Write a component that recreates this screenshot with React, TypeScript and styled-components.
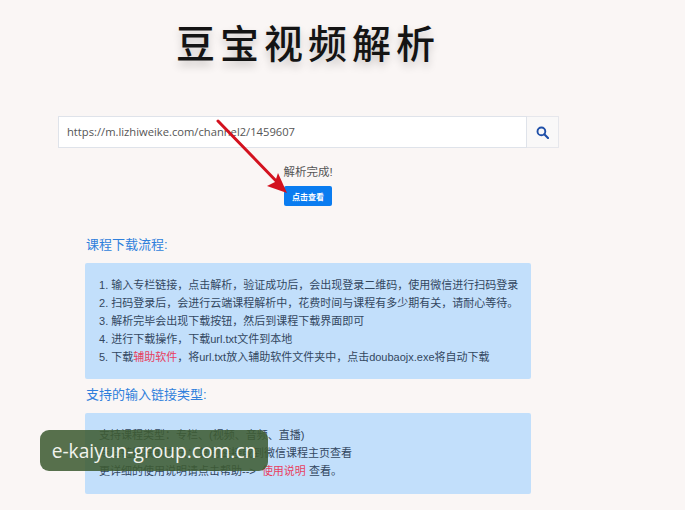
import { ReactElement } from 'react';

import styled, { createGlobalStyle } from 'styled-components';

const GlobalStyle = createGlobalStyle`
	html, body {
		margin: 0;
		padding: 0;
		background: #faf6f5;
	}
	body {
		font-family: "Liberation Sans", "Noto Sans CJK SC", sans-serif;
		overflow: hidden;
	}
`;

const STEPS = [
	'输入专栏链接，点击解析，验证成功后，会出现登录二维码，使用微信进行扫码登录',
	'扫码登录后，会进行云端课程解析中，花费时间与课程有多少期有关，请耐心等待。',
	'解析完毕会出现下载按钮，然后到课程下载界面即可',
	'进行下载操作，下载url.txt文件到本地',
];

export default function App(): ReactElement {
	return (
		<Page>
			<GlobalStyle />
			<Title>豆宝视频解析</Title>

			<SearchRow>
				<UrlField>https://m.lizhiweike.com/channel2/1459607</UrlField>
				<SearchButton type="button" aria-label="search">
					<svg width="13" height="13" viewBox="0 0 13 13" fill="none" aria-hidden="true">
						<circle cx="5.4" cy="5.4" r="3.9" stroke="#1f4fa8" strokeWidth="1.9" />
						<path d="M8.3 8.3 12 12" stroke="#1f4fa8" strokeWidth="2.1" strokeLinecap="round" />
					</svg>
				</SearchButton>
			</SearchRow>

			<Result>
				<ResultText>解析完成!</ResultText>
				<ViewButton type="button">点击查看</ViewButton>
			</Result>

			<Section>
				<Heading>课程下载流程:</Heading>
				<InfoBox>
					{STEPS.map((step, i) => (
						<Line key={step}>
							{i + 1}. {step}
						</Line>
					))}
					<Line>
						5. 下载<Hot>辅助软件</Hot>，将url.txt放入辅助软件文件夹中，点击doubaojx.exe将自动下载
					</Line>
				</InfoBox>
				<Heading>支持的输入链接类型:</Heading>
				<InfoBox $last>
					<Line>支持课程类型：专栏、(视频、音频、直播)</Line>
					<Line>专栏链接获取方法：复制链接或到微信课程主页查看</Line>
					<Line>
						更详细的使用说明请点击帮助--&gt;&nbsp; <Hot>使用说明</Hot> 查看。
					</Line>
				</InfoBox>
			</Section>

			<Arrow width="100" height="100" viewBox="0 0 100 100" aria-hidden="true">
				<path d="M3 3 66 68" stroke="#d3121f" strokeWidth="3" strokeLinecap="round" />
				<path d="M72 75 52 68 60 64 63 55Z" fill="#d3121f" />
			</Arrow>

			<Watermark>e-kaiyun-group.com.cn</Watermark>
		</Page>
	);
}

const Page = styled.div`
	position: relative;
	width: 685px;
	height: 510px;
	overflow: hidden;
	padding-top: 17px;
	box-sizing: border-box;
	background: #faf6f5;
`;

const Title = styled.h1`
	width: max-content;
	margin: 0 0 0 176px;
	height: 64px;
	font-family: "Noto Sans CJK SC", sans-serif;
	font-size: 39px;
	font-weight: 500;
	line-height: 48px;
	letter-spacing: 5px;
	color: #141414;
	text-shadow: 0 5px 9px rgba(0, 0, 0, 0.2);
`;

const SearchRow = styled.div`
	display: flex;
	width: 501px;
	height: 32px;
	margin: 35px 0 0 58px;
`;

const UrlField = styled.div`
	flex: 1;
	box-sizing: border-box;
	padding-left: 8px;
	background: #fff;
	border: 1px solid #dfe3ea;
	font-family: "Open Sans", "Liberation Sans", sans-serif;
	font-size: 11.2px;
	line-height: 30px;
	color: #555;
`;

const SearchButton = styled.button`
	display: flex;
	align-items: center;
	justify-content: center;
	width: 32px;
	padding: 0;
	background: #f9f8f8;
	border: 1px solid #e6e7ec;
	border-left: 0;
`;

const Result = styled.div`
	display: flex;
	flex-direction: column;
	align-items: center;
	width: 616px;
	margin-top: 16px;
`;

const ResultText = styled.div`
	font-size: 11.5px;
	line-height: 16px;
	color: #555;
`;

const ViewButton = styled.button`
	width: 48px;
	height: 20px;
	margin-top: 6px;
	padding: 0;
	background: #0a7cf0;
	border: 0;
	border-radius: 2px;
	color: #fff;
	font-family: inherit;
	font-size: 8px;
	font-weight: 700;
`;

const Section = styled.div`
	display: flex;
	flex-direction: column;
	width: 446px;
	margin: 30px 0 0 85px;
`;

const Heading = styled.div`
	height: 18px;
	padding-left: 1px;
	font-size: 13px;
	line-height: 18px;
	color: #2f7fdc;
`;

const InfoBox = styled.div<{ $last?: boolean }>`
	box-sizing: border-box;
	height: ${(p) => (p.$last ? 81 : 116)}px;
	margin: ${(p) => (p.$last ? '9px 0 0' : '9px 0 7px')};
	padding: 13px 0 0 14px;
	background: #c2dffb;
	border-radius: 2px;
`;

const Line = styled.div`
	font-size: 11px;
	line-height: 18px;
	color: #33475f;
	white-space: nowrap;
`;

const Hot = styled.span`
	color: #e8405f;
`;

const Arrow = styled.svg`
	position: absolute;
	left: 215px;
	top: 118px;
`;

const Watermark = styled.div`
	position: absolute;
	left: 40px;
	top: 430px;
	width: 228px;
	height: 41px;
	border-radius: 9px;
	background: rgba(62, 92, 50, 0.87);
	color: #f2f4ee;
	font-family: "Open Sans", sans-serif;
	font-size: 19.2px;
	line-height: 41px;
	text-align: center;
	white-space: nowrap;
`;
